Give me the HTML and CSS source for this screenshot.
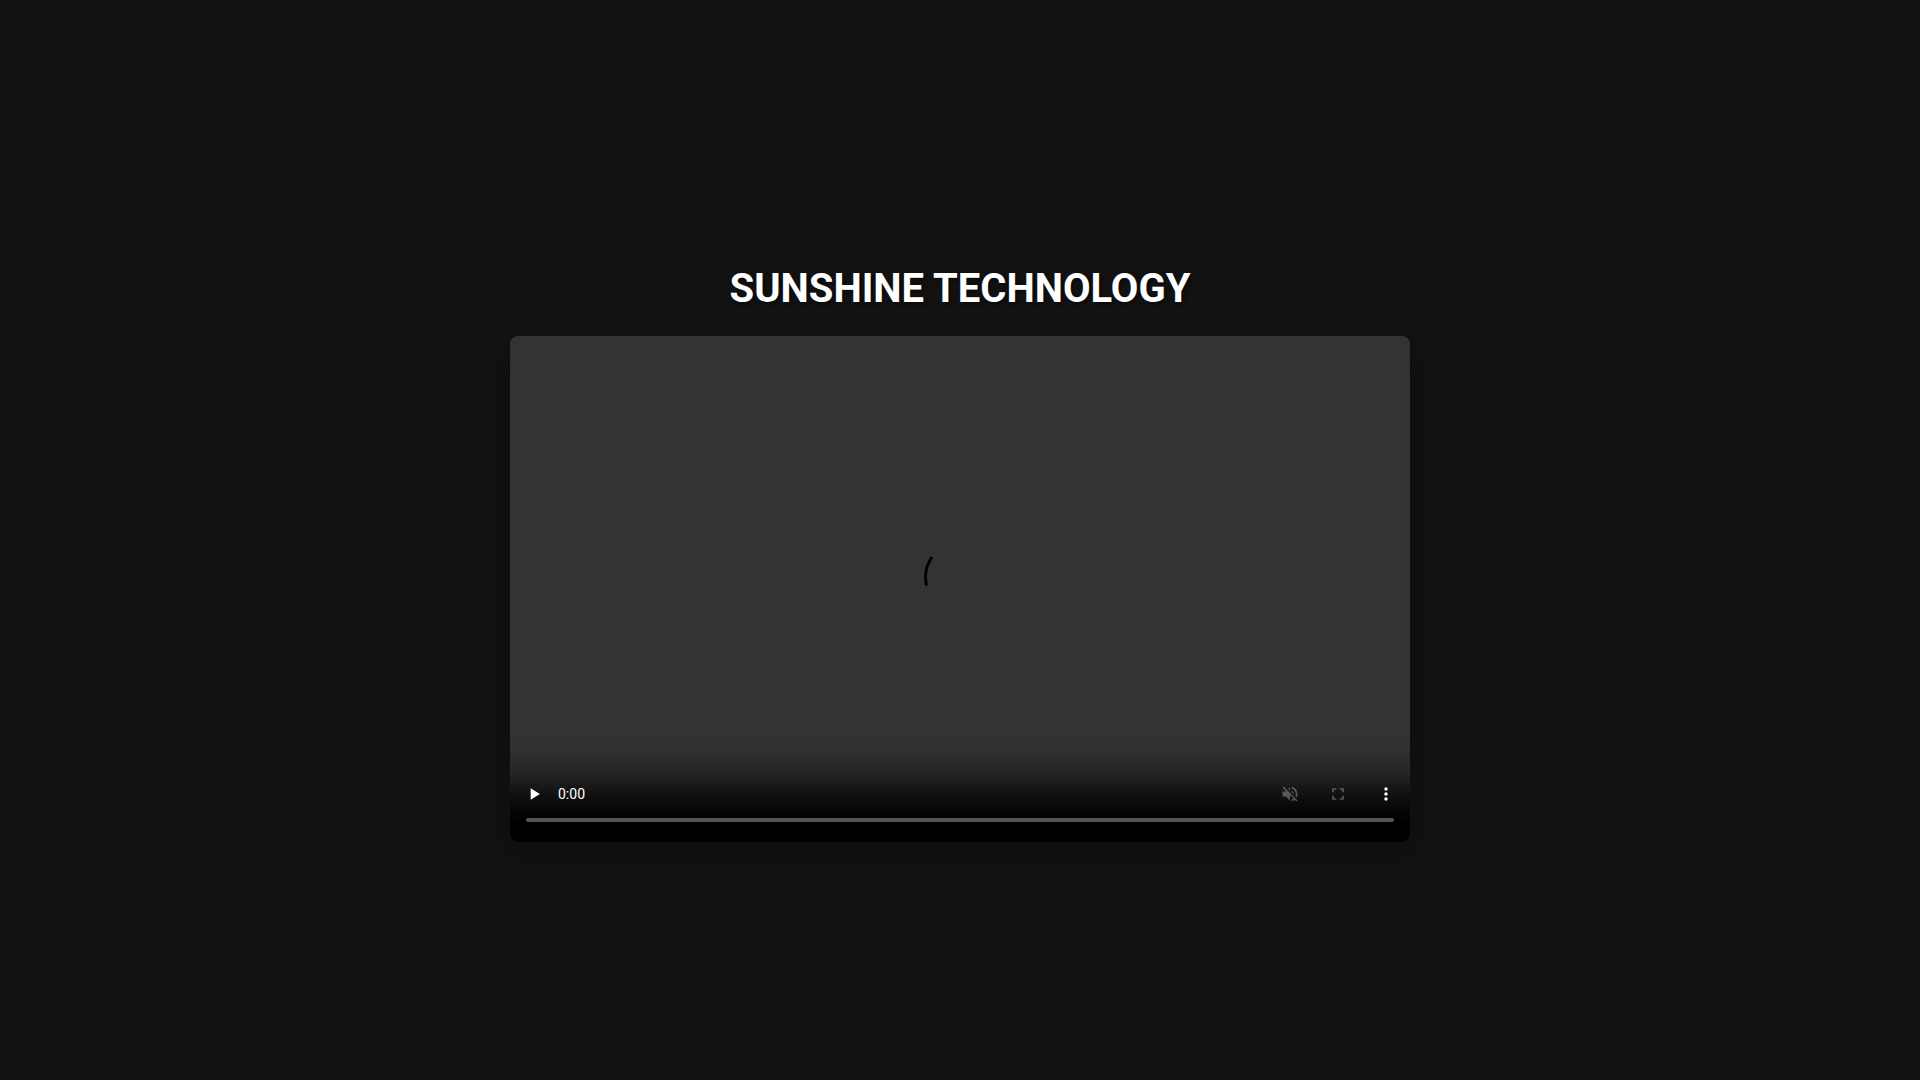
FILE: index.html
```html
<!DOCTYPE html>
<html lang="en">
<head>
  <meta charset="UTF-8" />
  <meta name="viewport" content="width=device-width, initial-scale=1.0" />
  <title>SUNSHINE TECHNOLOGY</title>
  <link rel="stylesheet" href="styles.css">
</head>
<body>
  <h1 class="title">SUNSHINE TECHNOLOGY</h1>

  <div class="player">
    <div class="loading">
      <svg width="72" height="72" viewBox="0 0 72 72" aria-hidden="true">
        <path d="M8 4C4 10 1.5 17 1.5 23C1.5 27 2 30 2.5 32.500" fill="none" stroke="#000" stroke-width="3" />
      </svg>
    </div>

    <!-- Player controls -->
    <div class="controls">
      <div class="buttons">
        <button type="button" class="control" aria-label="Play">
          <svg viewBox="0 0 24 24"><path d="M8 5v14l11-7z" /></svg>
        </button>
        <span class="time">0:00</span>
        <button type="button" class="control mute" aria-label="Mute" disabled>
          <svg viewBox="0 0 24 24"><path d="M16.5 12c0-1.77-1.02-3.29-2.5-4.03v2.21l2.45 2.45c.03-.2.05-.41.05-.63zm2.5 0c0 .94-.2 1.82-.54 2.64l1.51 1.51C20.63 14.91 21 13.5 21 12c0-4.28-2.99-7.86-7-8.77v2.06c2.89.86 5 3.54 5 6.71zM4.27 3L3 4.27 7.73 9H3v6h4l5 5v-6.73l4.25 4.25c-.67.52-1.42.93-2.25 1.18v2.06c1.38-.31 2.63-.95 3.69-1.81L19.73 21 21 19.73l-9-9L4.27 3zM12 4L9.91 6.09 12 8.18V4z" /></svg>
        </button>
        <button type="button" class="control" aria-label="Full screen" disabled>
          <svg viewBox="0 0 24 24"><path d="M7 14H5v5h5v-2H7v-3zm-2-4h2V7h3V5H5v5zm12 7h-3v2h5v-5h-2v3zM14 5v2h3v3h2V5h-5z" /></svg>
        </button>
        <button type="button" class="control" aria-label="More options">
          <svg viewBox="0 0 24 24"><path d="M12 8c1.1 0 2-.9 2-2s-.9-2-2-2-2 .9-2 2 .9 2 2 2zm0 2c-1.1 0-2 .9-2 2s.9 2 2 2 2-.9 2-2-.9-2-2-2zm0 6c-1.1 0-2 .9-2 2s.9 2 2 2 2-.9 2-2-.9-2-2-2z" /></svg>
        </button>
      </div>
      <input type="range" class="timeline" aria-label="Video time" min="0" max="100" value="0" />
    </div>
  </div>
</body>
</html>
```

FILE: styles.css
```css
* {
  box-sizing: border-box;
}
body {
  font-family: Roboto, sans-serif;
  background-color: #121212;
  color: #fff;
  margin: 0;
  min-height: 100vh;
  display: flex;
  flex-direction: column;
  align-items: center;
  justify-content: center;
}
.title {
  font-size: 40px;
  line-height: 47px;
  font-weight: 700;
  margin: 27px 0 24px;
  text-align: center;
  text-shadow: 2px 2px 4px rgba(0,0,0,0.5);
}
.player {
  position: relative;
  display: flex;
  flex-direction: column;
  justify-content: flex-end;
  width: 90%;
  max-width: 900px;
  aspect-ratio: 16 / 9;
  background-color: #333;
  border-radius: 8px;
  overflow: hidden;
  box-shadow: 0 10px 30px rgba(0,0,0,0.3);
}
.loading {
  position: absolute;
  inset: 0;
  display: flex;
  align-items: center;
  justify-content: center;
}
.controls {
  position: relative;
  padding: 40px 0 20px;
  background: linear-gradient(to bottom, rgba(0,0,0,0) 0%, rgba(0,0,0,0.06) 18%, rgba(0,0,0,0.24) 36%, rgba(0,0,0,0.41) 45%, rgba(0,0,0,0.6) 54%, rgba(0,0,0,0.76) 63%, rgba(0,0,0,0.9) 73%, rgba(0,0,0,0.98) 82%, #000 90%);
}
.buttons {
  display: flex;
  align-items: center;
  height: 48px;
}
.control {
  display: flex;
  align-items: center;
  justify-content: center;
  width: 48px;
  height: 48px;
  padding: 0;
  border: none;
  background: none;
  color: #fff;
  cursor: pointer;
}
.control svg {
  width: 20px;
  height: 20px;
  fill: currentColor;
}
.control:disabled {
  opacity: 0.3;
  cursor: default;
}
.mute {
  margin-left: auto;
}
.time {
  font-size: 14px;
  line-height: 16px;
}
.timeline {
  display: block;
  appearance: none;
  width: calc(100% - 32px);
  height: 4px;
  margin: 0 16px;
  border-radius: 2px;
  background-color: #545454;
  cursor: pointer;
}
.timeline::-webkit-slider-thumb {
  appearance: none;
  width: 0;
  height: 0;
}
```
